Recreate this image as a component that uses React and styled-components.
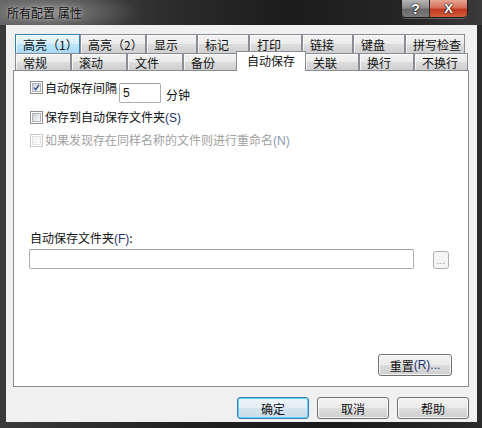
import React from "react";
import styled, { createGlobalStyle } from "styled-components";

const FONT = `"Noto Sans CJK SC", "Noto Sans", sans-serif`;
const LATIN = `"Liberation Sans", "DejaVu Sans", sans-serif`;

const GlobalStyle = createGlobalStyle`
  html, body { margin: 0; padding: 0; background: #1b1b1b; }
  * { box-sizing: border-box; }
`;

const rowOne = [
  { label: "高亮（1）", w: 65, hover: true },
  { label: "高亮（2）", w: 66 },
  { label: "显示", w: 51 },
  { label: "标记", w: 52 },
  { label: "打印", w: 53 },
  { label: "链接", w: 51 },
  { label: "键盘", w: 52 },
  { label: "拼写检查", w: 60 },
];

const rowTwo = [
  { label: "常规", w: 56 },
  { label: "滚动", w: 56 },
  { label: "文件", w: 56 },
  { label: "备份", w: 54 },
  { label: "自动保存", w: 68, selected: true },
  { label: "关联", w: 54 },
  { label: "换行", w: 55 },
  { label: "不换行", w: 54 },
];

const Window = styled.div`
  width: 482px;
  height: 428px;
  display: flex;
  flex-direction: column;
  padding: 0 5px 6px 6px;
  background: linear-gradient(90deg, #3a3a3a 0%, #202020 40%, #1a1a1a 70%, #2a2a2a 100%);
  font-family: ${FONT};
  font-size: 12px;
  color: #111;
  overflow: hidden;
`;

const TitleBar = styled.div`
  height: 25px;
  display: flex;
  align-items: flex-start;
  margin: 0 -5px 0 -6px;
  padding-left: 7px;
  background:
    radial-gradient(ellipse 90px 22px at 50px 12px, rgba(150, 150, 150, 0.75), rgba(120, 120, 120, 0) 100%),
    linear-gradient(90deg, #5a5a5a 0%, #2c2c2c 35%, #1c1c1c 60%, #262626 85%, #3a3a3a 100%);
`;

const Title = styled.div`
  margin-top: 6px;
  line-height: 14px;
  font-size: 12px;
  color: #0a0a0a;
  text-shadow: 0 0 6px rgba(255, 255, 255, 0.55), 0 0 2px rgba(255, 255, 255, 0.5);
  white-space: nowrap;
`;

const CaptionGroup = styled.div`
  margin-left: auto;
  margin-right: 14px;
  display: flex;
  height: 18px;
  border: 1px solid #1e1e1e;
  border-top: none;
  border-radius: 0 0 5px 5px;
  overflow: hidden;
  box-shadow: 0 1px 0 rgba(255, 255, 255, 0.25);
`;

const CaptionButton = styled.div`
  width: ${(p) => p.$w}px;
  height: 100%;
  display: flex;
  align-items: center;
  justify-content: center;
  font-family: ${LATIN};
  font-weight: bold;
  font-size: ${(p) => (p.$close ? 13 : 14)}px;
  color: #fff;
  text-shadow: 0 0 2px #000, 0 0 1px #000;
  background: ${(p) =>
    p.$close
      ? "linear-gradient(#e6a594 0%, #d4705c 45%, #c23a1f 55%, #cf5f3a 100%)"
      : "linear-gradient(#b4b4b4 0%, #8e8e8e 45%, #6a6a6a 55%, #7c7c7c 100%)"};
  border-left: ${(p) => (p.$close ? "1px solid #2a2a2a" : "none")};
`;

const Client = styled.div`
  flex: 1;
  display: flex;
  flex-direction: column;
  padding: 9px 8px 0 7px;
  background: #f0f0f0;
`;

const TabRow = styled.div`
  display: flex;
  align-items: flex-end;
  height: ${(p) => p.$h}px;
  margin-left: 2px;
`;

const Tab = styled.div`
  flex: none;
  width: ${(p) => p.$w + (p.$selected ? 2 : 0)}px;
  height: ${(p) => p.$h}px;
  margin: ${(p) => (p.$selected ? "0 -1px -1px -1px" : "0")};
  position: ${(p) => (p.$selected ? "relative" : "static")};
  z-index: ${(p) => (p.$selected ? 1 : 0)};
  padding-left: ${(p) => (p.$selected ? 10 : 7)}px;
  padding-top: ${(p) => (p.$selected ? 0 : 1)}px;
  line-height: ${(p) => p.$h - 2}px;
  white-space: nowrap;
  border: 1px solid ${(p) => (p.$hover ? "#3c7fb1" : "#898c95")};
  border-bottom: none;
  background: ${(p) =>
    p.$selected
      ? "#ffffff"
      : p.$hover
      ? "linear-gradient(#eaf6fd 0%, #d9f0fc 50%, #bee6fd 50%, #a7d9f5 100%)"
      : "linear-gradient(#f2f2f2 0%, #ebebeb 50%, #dddddd 50%, #cfcfcf 100%)"};
  box-shadow: ${(p) => (p.$selected ? "none" : "inset 1px 1px 0 rgba(255,255,255,0.7)")};
`;

const Panel = styled.div`
  height: 317px;
  display: flex;
  flex-direction: column;
  align-items: flex-start;
  padding: 10px 16px 10px 16px;
  background: #fff;
  border: 1px solid #898c95;
`;

const IntervalRow = styled.div`
  display: flex;
  align-items: flex-start;
`;

const CheckRow = styled.label`
  display: flex;
  align-items: center;
  gap: 2px;
  height: 13px;
  margin-top: ${(p) => p.$top || 0}px;
  color: ${(p) => (p.$disabled ? "#a0a0a0" : "inherit")};
  white-space: nowrap;
`;

const CheckText = styled.span`
  line-height: 14px;
  ${(p) => (p.$w ? `width: ${p.$w}px;` : "")}
`;

const Box = styled.span`
  flex: none;
  width: 13px;
  height: 13px;
  display: flex;
  align-items: center;
  justify-content: center;
  border: 1px solid ${(p) => (p.$disabled ? "#c8c8c8" : "#8e8f8f")};
  background: #fff;

  & > i {
    width: 9px;
    height: 9px;
    display: flex;
    align-items: center;
    justify-content: center;
    border: 1px solid ${(p) => (p.$disabled ? "#e2e2e2" : "#b0b4ba")};
    background: ${(p) =>
      p.$disabled
        ? "linear-gradient(135deg, #f2f2f2, #fbfbfb)"
        : "linear-gradient(135deg, #cdd1d6 0%, #e8eaec 60%, #f7f7f7 100%)"};
  }
`;

const Mnemonic = styled.span`
  font-family: ${LATIN};
  font-size: 12px;
  color: ${(p) => (p.$disabled ? "#8d97b0" : "#1f3270")};
`;

const TextInput = styled.div`
  flex: none;
  width: ${(p) => p.$w}px;
  height: 20px;
  margin-top: ${(p) => p.$top || 0}px;
  margin-left: ${(p) => p.$left || 0}px;
  padding-left: 3px;
  border: 1px solid #abadb3;
  border-top-color: #9b9da3;
  border-radius: 2px;
  background: #fff;
  font-family: ${LATIN};
  font-size: 12px;
  line-height: 18px;
`;

const Unit = styled.span`
  margin: 7px 0 0 5px;
  line-height: 14px;
`;

const FolderLabel = styled.div`
  margin-top: 84px;
  line-height: 14px;
`;

const FolderRow = styled.div`
  display: flex;
  align-items: flex-start;
  margin-top: 3px;
  margin-left: -1px;
`;

const BrowseButton = styled.div`
  width: 16px;
  height: 18px;
  margin: 2px 0 0 19px;
  border: 1px solid #adb2b5;
  border-radius: 3px;
  background: #f4f4f4;
  color: #9a9a9a;
  font-family: ${LATIN};
  font-size: 10px;
  line-height: 18px;
  text-align: center;
`;

const Button = styled.div`
  flex: none;
  width: ${(p) => p.$w || 72}px;
  height: 22px;
  display: flex;
  align-items: center;
  justify-content: center;
  border: 1px solid ${(p) => (p.$default ? "#3c7fb1" : "#707070")};
  border-radius: 3px;
  background: ${(p) =>
    p.$default
      ? "linear-gradient(#eef5fa 0%, #e4eef5 50%, #d5e4ee 50%, #c9dbe8 100%)"
      : "linear-gradient(#f2f2f2 0%, #ebebeb 50%, #dddddd 50%, #cfcfcf 100%)"};
  box-shadow: ${(p) =>
    p.$default ? "inset 0 0 0 1px #5ed1f6" : "inset 0 0 0 1px rgba(255,255,255,0.75)"};
  white-space: nowrap;
`;

const ResetButton = styled(Button)`
  margin-top: auto;
  align-self: flex-end;
`;

const ButtonBar = styled.div`
  display: flex;
  justify-content: flex-end;
  gap: 8px;
  margin-top: 10px;
`;

const Check = ({ checked, disabled }) => (
  <Box $disabled={disabled}>
    <i>
      {checked && (
        <svg width="9" height="9" viewBox="0 0 9 9">
          <path d="M1.2 4.6 L3.4 7.2 L7.8 1" fill="none" stroke="#2c4a8c" strokeWidth="1.7" />
        </svg>
      )}
    </i>
  </Box>
);

export default function App() {
  return (
    <>
      <GlobalStyle />
      <Window>
        <TitleBar>
          <Title>所有配置 属性</Title>
          <CaptionGroup>
            <CaptionButton $w={27}>?</CaptionButton>
            <CaptionButton $w={38} $close>X</CaptionButton>
          </CaptionGroup>
        </TitleBar>
        <Client>
          <TabRow $h={19}>
            {rowOne.map((t) => (
              <Tab key={t.label} $w={t.w} $h={19} $hover={t.hover}>
                {t.label}
              </Tab>
            ))}
          </TabRow>
          <TabRow $h={17}>
            {rowTwo.map((t) => (
              <Tab key={t.label} $w={t.w} $h={t.selected ? 20 : 17} $selected={t.selected}>
                {t.label}
              </Tab>
            ))}
          </TabRow>
          <Panel>
            <IntervalRow>
              <CheckRow>
                <Check checked />
                <CheckText $w={74}>自动保存间隔</CheckText>
              </CheckRow>
              <TextInput $w={42} $top={2}>5</TextInput>
              <Unit>分钟</Unit>
            </IntervalRow>
            <CheckRow $top={8}>
              <Check />
              <CheckText>
                保存到自动保存文件夹<Mnemonic>(S)</Mnemonic>
              </CheckText>
            </CheckRow>
            <CheckRow $top={10} $disabled>
              <Check disabled />
              <CheckText>
                如果发现存在同样名称的文件则进行重命名<Mnemonic $disabled>(N)</Mnemonic>
              </CheckText>
            </CheckRow>
            <FolderLabel>
              自动保存文件夹<Mnemonic>(F)</Mnemonic>:
            </FolderLabel>
            <FolderRow>
              <TextInput $w={385} />
              <BrowseButton>...</BrowseButton>
            </FolderRow>
            <ResetButton $w={74}>
              重置<Mnemonic>(R)...</Mnemonic>
            </ResetButton>
          </Panel>
          <ButtonBar>
            <Button $default>确定</Button>
            <Button>取消</Button>
            <Button>帮助</Button>
          </ButtonBar>
        </Client>
      </Window>
    </>
  );
}
